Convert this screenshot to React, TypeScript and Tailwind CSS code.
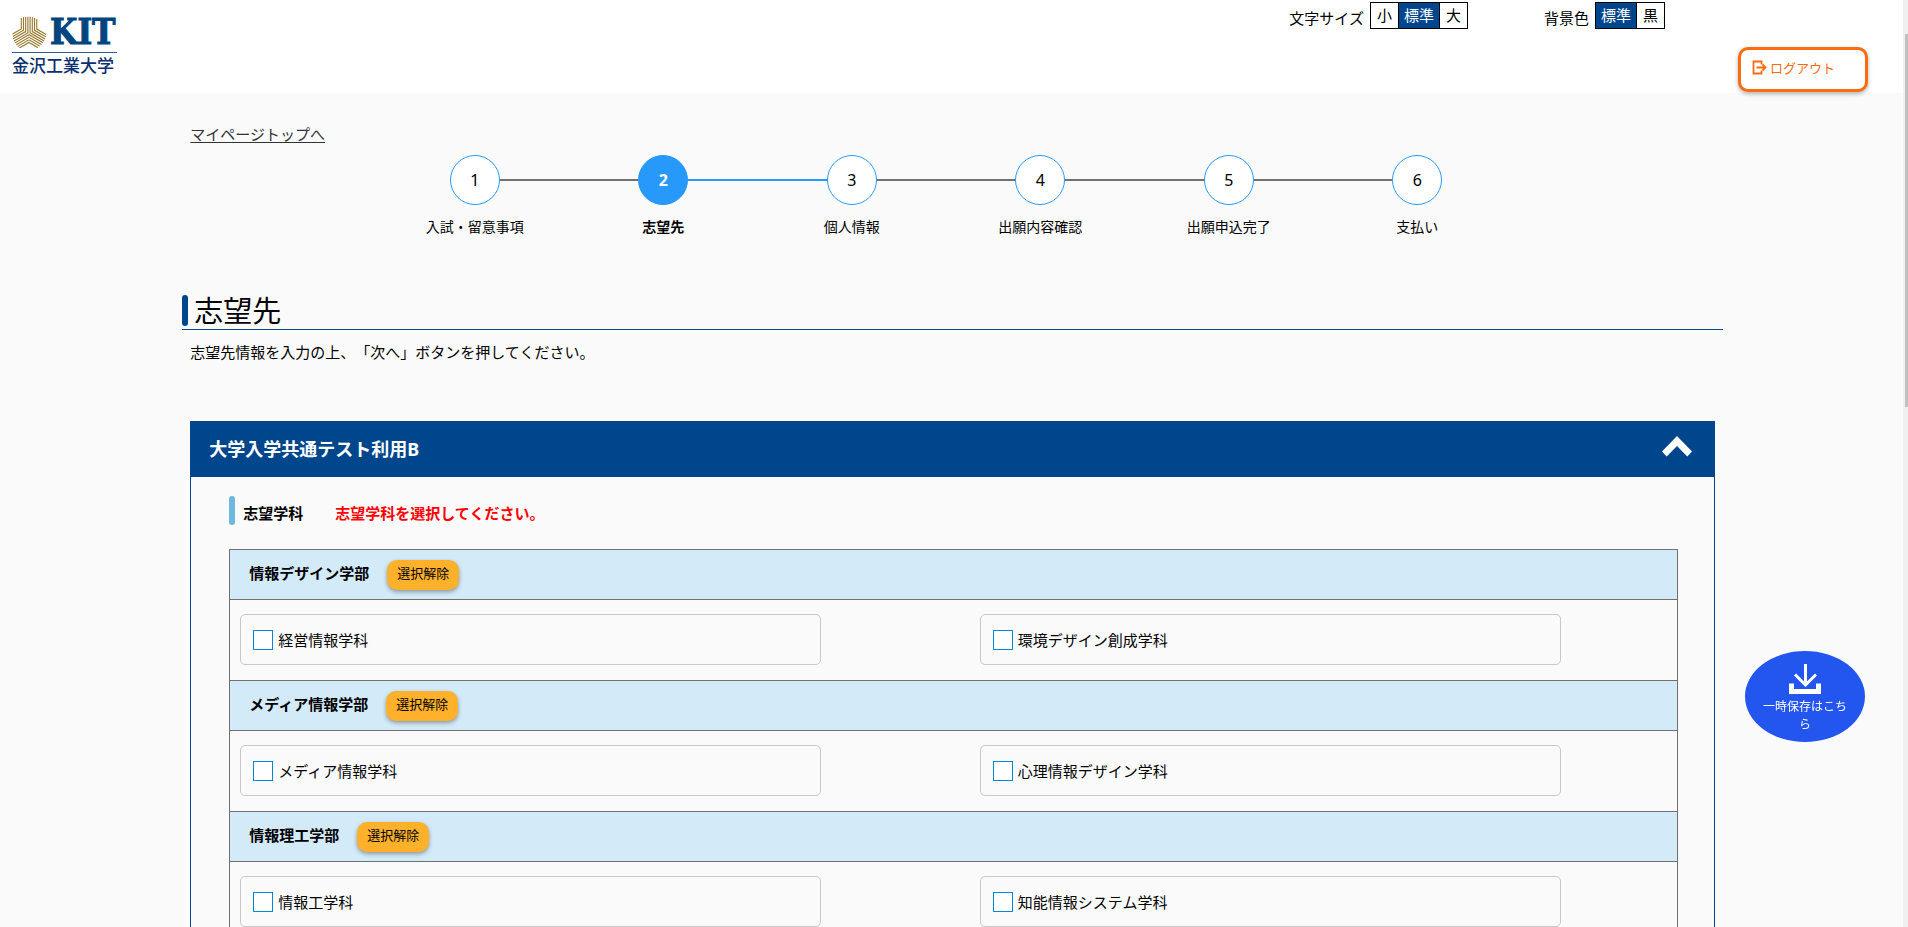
import { useState } from "react";

const steps = ["入試・留意事項", "志望先", "個人情報", "出願内容確認", "出願申込完了", "支払い"];
const currentStep = 1;

const faculties = [
  { name: "情報デザイン学部", departments: ["経営情報学科", "環境デザイン創成学科"] },
  { name: "メディア情報学部", departments: ["メディア情報学科", "心理情報デザイン学科"] },
  { name: "情報理工学部", departments: ["情報工学科", "知能情報システム学科"] },
];

function Emblem() {
  return (
    <svg viewBox="-17 -17.5 34 32" className="h-8 w-[34px]" fill="none" stroke="#96772a" strokeWidth="1.1" aria-hidden="true">
      {[0, 120, 240].map((angle) => (
        <g key={angle} transform={`rotate(${angle})`}>
          <path d="M-1.100-16.800V-.6L-15 7.400" />
          <path d="M-3.300-16.600V-1.900L-15.800 5.300" />
          <path d="M-5.500-16.200V-3.200L-16.200 3" />
          <path d="M-7.700-15.500V-4.500L-16.500 .6" />
        </g>
      ))}
    </svg>
  );
}

function Logo() {
  return (
    <a href="#" className="ml-3 mt-4 flex w-[105px] flex-col text-[#00457f]">
      <span className="flex h-8 items-center gap-1">
        <Emblem />
        <span className="font-['DejaVu_Serif_Condensed','DejaVu_Serif',serif] text-[35px] leading-8 font-bold [-webkit-text-stroke:1px_#00457f]">
          KIT
        </span>
      </span>
      <span className="mt-1 border-t border-[#2a6199] pt-1 text-[17px] leading-[18px] font-medium whitespace-nowrap text-[#0a2f70]">
        金沢工業大学
      </span>
    </a>
  );
}

function Choices({ label, options, selected }: { label: string; options: string[]; selected: string }) {
  return (
    <div role="group" aria-label={label} className="flex items-start gap-1.5">
      <span className="pt-1 text-[15px] leading-6">{label}</span>
      <div className="flex border border-black">
        {options.map((o) => (
          <button
            key={o}
            type="button"
            className={
              o === selected
                ? "border-x border-black bg-[#00468c] px-[5px] text-[15px] leading-[25px] text-white first:border-l-0"
                : "px-1.5 text-[15px] leading-[25px]"
            }
          >
            {o}
          </button>
        ))}
      </div>
    </div>
  );
}

function Header() {
  return (
    <header className="flex h-[93px] items-start justify-between bg-white pr-[35px]">
      <Logo />
      <div className="flex items-start">
        <div className="mt-0.5 mr-[73px] flex gap-[76px]">
          <Choices label="文字サイズ" options={["小", "標準", "大"]} selected="標準" />
          <Choices label="背景色" options={["標準", "黒"]} selected="標準" />
        </div>
        <button
          type="button"
          className="mt-[47px] flex h-[45px] w-[130px] items-start gap-[3px] rounded-[10px] border-3 border-[#fb6c10] bg-white pt-2 pl-[11px] text-[13px] leading-5 text-[#fb6c10] shadow-[0_2px_4px_rgba(0,0,0,0.3)]"
        >
          <svg viewBox="0 0 15 15" className="mt-0.5 size-[15px]" fill="none" stroke="currentColor" strokeWidth="1.8" aria-hidden="true">
            <path d="M9.500 4.500V1.500H1.500v12h8V10.500M4.500 7.500h9M10.500 4.500l3 3L10.500 10.500" />
          </svg>
          ログアウト
        </button>
      </div>
    </header>
  );
}

function Stepper() {
  return (
    <div className="flex justify-center pr-[13px]">
      <ol className="flex w-full max-w-[1131px]">
        {steps.map((label, i) => (
          <li key={label} className="flex flex-1 flex-col items-center">
            <div className="flex w-full items-center">
              <span className={i === 0 ? "flex-1" : i === currentStep + 1 ? "h-0.5 flex-1 bg-[#2699fb]" : "h-0.5 flex-1 bg-[#707070]"} />
              <span
                className={
                  i === currentStep
                    ? "size-[50px] rounded-full border border-[#2699fb] bg-[#2699fb] text-center text-[16px] leading-[48px] font-bold text-white"
                    : "size-[50px] rounded-full border border-[#2699fb] bg-white text-center text-[16px] leading-[48px]"
                }
              >
                {i + 1}
              </span>
              <span className={i === steps.length - 1 ? "flex-1" : i === currentStep ? "h-0.5 flex-1 bg-[#2699fb]" : "h-0.5 flex-1 bg-[#707070]"} />
            </div>
            <span className={i === currentStep ? "mt-3 text-[14px] leading-5 font-bold" : "mt-3 text-[14px] leading-5"}>{label}</span>
          </li>
        ))}
      </ol>
    </div>
  );
}

export default function App() {
  const [open, setOpen] = useState(true);
  const [checked, setChecked] = useState<string[]>([]);
  const toggle = (d: string) => setChecked((c) => (c.includes(d) ? c.filter((x) => x !== d) : [...c, d]));

  return (
    <div className="flex h-screen overflow-hidden bg-[#fafafa] font-['Noto_Sans','Noto_Sans_CJK_JP',sans-serif] text-black [text-spacing-trim:space-all]">
      <div className="min-w-0 flex-1 overflow-hidden">
        <Header />
        <main className="mr-[9.9%] ml-[10%] pt-[31px]">
          <a href="#" className="block w-fit text-[15px] leading-5 text-[#333] underline underline-offset-2">
            マイページトップへ
          </a>
          <div className="mt-[11px]">
            <Stepper />
          </div>

          <div className="-mx-2 mt-[58px] flex items-start gap-1.5 border-b border-[#00468c] pb-0.5">
            <span className="h-[31px] w-1.5 rounded-[3px] bg-[#00468c]" />
            <h1 className="text-[29px] leading-8">志望先</h1>
          </div>
          <p className="mt-3 text-[15px] leading-5">志望先情報を入力の上、「次へ」ボタンを押してください。</p>

          <section className="mt-[59px] border border-[#00468c]">
            <button
              type="button"
              onClick={() => setOpen(!open)}
              aria-expanded={open}
              className="flex h-[55px] w-full items-center justify-between bg-[#00468c] pr-[22px] pb-px pl-[18px] text-left text-[18px] font-bold text-white"
            >
              大学入学共通テスト利用B
              <svg viewBox="0 0 30 21" className="mb-1.5 h-[21px] w-[30px]" fill="currentColor" aria-hidden="true">
                <path d="M15 0 30 15.500 25.300 20.500 15 10 4.700 20.500 0 15.500Z" />
              </svg>
            </button>
            {open && (
              <div className="pt-[19px] pr-9 pl-[38px]">
                <div className="flex items-end font-bold">
                  <span className="h-[29px] w-1.5 rounded-[3px] bg-[#6bb8e0]" />
                  <h2 className="ml-2 text-[15px] leading-6">志望学科</h2>
                  <p className="ml-8 text-[15px] leading-6 text-[#f00]">志望学科を選択してください。</p>
                </div>
                <div className="mt-6 border border-[#707070]">
                  {faculties.map((f) => (
                    <fieldset key={f.name} className="border-b border-[#707070]">
                      <div className="flex h-[50px] items-center gap-[18px] border-b border-[#707070] bg-[#d3eaf8] pl-[19px]">
                        <h3 className="pb-1 text-[15px] leading-5 font-bold">{f.name}</h3>
                        <button
                          type="button"
                          onClick={() => setChecked((c) => c.filter((d) => !f.departments.includes(d)))}
                          className="h-[30px] rounded-[10px] bg-[#ffb12c] px-2.5 pb-1 text-[13px] leading-5 shadow-[0_2px_4px_rgba(0,0,0,0.35)]"
                        >
                          選択解除
                        </button>
                      </div>
                      <div className="grid grid-cols-2 gap-x-[12%] pt-3.5 pr-[8%] pb-[15px] pl-2.5">
                        {f.departments.map((d) => (
                          <label key={d} className="flex h-[51px] items-center gap-[5px] rounded-[5px] border border-[#c8c8c8] pl-3 text-[15px] leading-5">
                            <input
                              type="checkbox"
                              checked={checked.includes(d)}
                              onChange={() => toggle(d)}
                              className="size-5 appearance-none border border-[#0086d9] bg-white checked:bg-[#0086d9]"
                            />
                            {d}
                          </label>
                        ))}
                      </div>
                    </fieldset>
                  ))}
                </div>
              </div>
            )}
          </section>
        </main>
      </div>

      <div className="flex w-[5px] justify-end bg-[#f0f0f0] pt-[34px]" aria-hidden="true">
        <div className="h-[373px] w-[3px] bg-[#c1c1c1]" />
      </div>

      <button
        type="button"
        className="fixed top-[651px] right-[43px] flex h-[91px] w-[120px] flex-col items-center rounded-[50%] bg-[#2356ee] px-4 pt-[13px] text-[12px] leading-[18px] text-white"
      >
        <svg viewBox="0 0 32 30" className="h-[30px] w-8" fill="none" stroke="currentColor" strokeWidth="3" aria-hidden="true">
          <path d="M16.500 0V20M6 10.500 16.500 21 27 10.500" />
          <path d="M2.500 19.500V27.500H29.500V19.500" strokeWidth="5" />
        </svg>
        <span className="mt-1 w-[84px]">一時保存はこちら</span>
      </button>
    </div>
  );
}
